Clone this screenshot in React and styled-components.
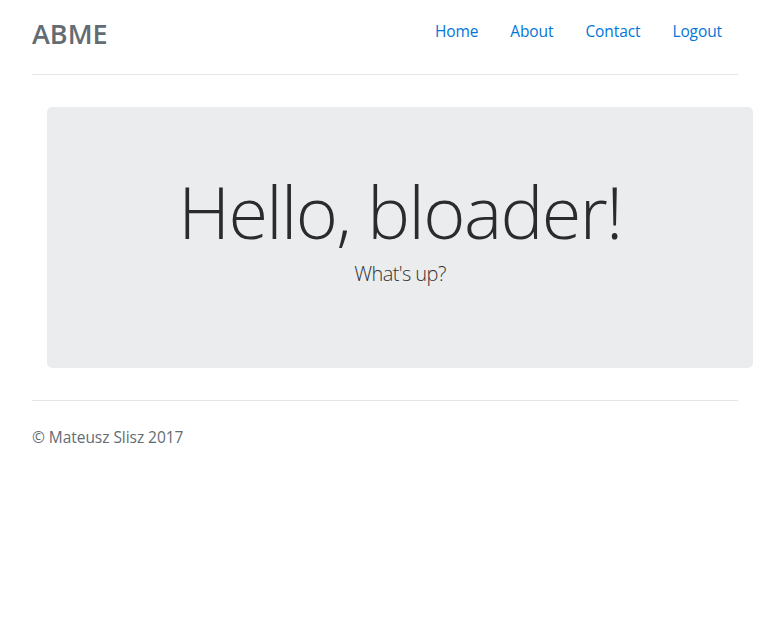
import React from "react";
import styled, { createGlobalStyle } from "styled-components";

const Global = createGlobalStyle`
  html, body { margin: 0; padding: 0; background: #fff; }
  body {
    font-family: "Open Sans", "Noto Sans", "Liberation Sans", sans-serif;
    font-size: 16px;
    line-height: 1.5;
    color: #292b2c;
  }
  * { box-sizing: border-box; }
`;

const Page = styled.div`
  width: 706px;
  margin: 0 0 0 32px;
`;

const Header = styled.header`
  display: flex;
  justify-content: space-between;
  align-items: flex-start;
  padding-top: 10px;
  padding-bottom: 16px;
  border-bottom: 1px solid #e5e5e5;
`;

const Brand = styled.h3`
  margin: 0;
  font-size: 27px;
  font-weight: 600;
  line-height: 48px;
  color: #636c72;
`;

const Nav = styled.nav`
  display: flex;
  margin-top: 1px;
`;

const NavLink = styled.a`
  display: block;
  padding: 8px 16px;
  line-height: 24px;
  font-size: 15.5px;
  letter-spacing: -0.1px;
  color: #0275d8;
  text-decoration: none;
`;

const Jumbotron = styled.section`
  margin: 32px -15px 32px 15px;
  height: 261px;
  padding: 65px 32px 0;
  background: #ebecee;
  border-radius: 5px;
  text-align: center;
`;

const Display = styled.h1`
  margin: 0 0 8px;
  font-size: 72px;
  font-weight: 300;
  line-height: 1.1;
  letter-spacing: -1.6px;
  color: #292b2c;
`;

const Lead = styled.p`
  margin: 0;
  font-size: 20px;
  font-weight: 300;
  line-height: 30px;
  letter-spacing: -0.6px;
  color: #333;
`;

const Footer = styled.footer`
  padding-top: 24px;
  border-top: 1px solid #e5e5e5;
  color: #636c72;
  font-size: 15.5px;
  letter-spacing: -0.05px;
  line-height: 24px;
`;

export default function App() {
  return (
    <>
      <Global />
      <Page>
        <Header>
          <Brand>ABME</Brand>
          <Nav>
            <NavLink href="#">Home</NavLink>
            <NavLink href="#">About</NavLink>
            <NavLink href="#">Contact</NavLink>
            <NavLink href="#">Logout</NavLink>
          </Nav>
        </Header>
        <Jumbotron>
          <Display>Hello, bloader!</Display>
          <Lead>What's up?</Lead>
        </Jumbotron>
        <Footer>© Mateusz Slisz 2017</Footer>
      </Page>
    </>
  );
}
